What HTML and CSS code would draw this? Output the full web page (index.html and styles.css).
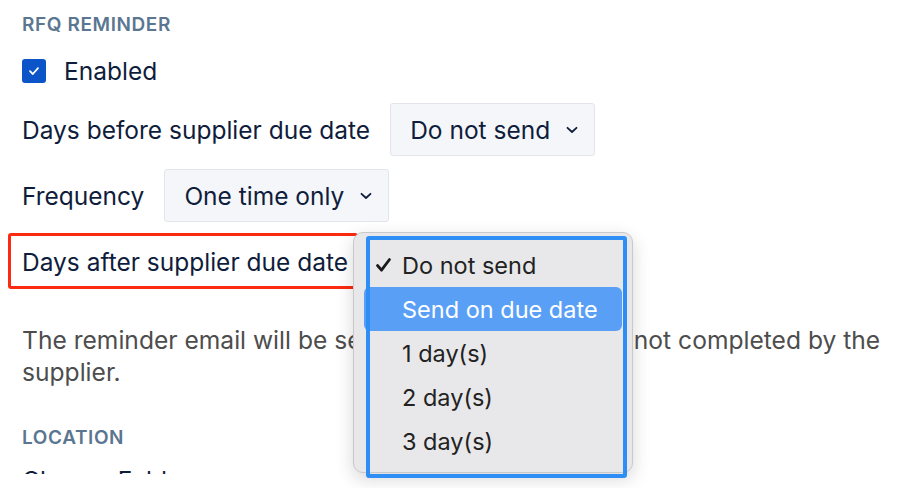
FILE: index.html
```html
<!DOCTYPE html>
<html>
<head>
<meta charset="utf-8">
<link rel="stylesheet" href="styles.css">
</head>
<body>
<div class="screen">
  <div class="page">
    <h2 class="section-title">RFQ Reminder</h2>
    <label class="check-row">
      <span class="checkbox">
        <svg width="12" height="10" viewBox="0 0 12 10"><path d="M2 5.2 L4.8 8 L10 2.2" fill="none" stroke="#fff" stroke-width="1.8" stroke-linecap="round" stroke-linejoin="round"/></svg>
      </span>
      <span class="check-label">Enabled</span>
    </label>
    <div class="field-row">
      <span class="label">Days before supplier due date</span>
      <div class="select">
        <span>Do not send</span>
        <svg class="chev" width="12" height="8" viewBox="0 0 12 8"><path d="M1.5 1.8 L6 6 L10.5 1.8" fill="none" stroke="#0f1d3c" stroke-width="1.8" stroke-linecap="round" stroke-linejoin="round"/></svg>
      </div>
    </div>
    <div class="field-row">
      <span class="label">Frequency</span>
      <div class="select">
        <span>One time only</span>
        <svg class="chev" width="12" height="8" viewBox="0 0 12 8"><path d="M1.5 1.8 L6 6 L10.5 1.8" fill="none" stroke="#0f1d3c" stroke-width="1.8" stroke-linecap="round" stroke-linejoin="round"/></svg>
      </div>
    </div>
    <div class="field-row">
      <span class="label marked">Days after supplier due date</span>
    </div>
    <p class="help">The reminder email will be sent if the RFQ request is not completed by the supplier.</p>
    <h2 class="section-title loc">Location</h2>
    <div class="text-row">Choose Folder</div>
  </div>

  <div class="menu">
    <div class="menu-item checked">
      <svg class="tick" width="18" height="16" viewBox="0 0 18 16"><path d="M2.5 8.5 L6.5 13.2 L14.5 2.5" fill="none" stroke="#1a1a1a" stroke-width="2.8" stroke-linecap="round" stroke-linejoin="round"/></svg>
      Do not send
    </div>
    <div class="menu-item active">Send on due date</div>
    <div class="menu-item">1 day(s)</div>
    <div class="menu-item">2 day(s)</div>
    <div class="menu-item">3 day(s)</div>
  </div>
  <div class="annot-blue"></div>
</div>
</body>
</html>
```
FILE: styles.css
```css
* { box-sizing: border-box; }
html, body { margin: 0; padding: 0; background: #fff; }
body { font-family: Inter, "Noto Sans", sans-serif; }

.screen { position: relative; width: 905px; height: 488px; overflow: hidden; }

.page {
  height: 474px;
  overflow: hidden;
  padding: 13px 8px 0 22px;
  display: flex;
  flex-direction: column;
  align-items: flex-start;
}
.page > * { flex-shrink: 0; }

.section-title {
  margin: 0;
  font-size: 19px;
  line-height: 24px;
  font-weight: 600;
  letter-spacing: 0.6px;
  color: #5b7691;
  text-transform: uppercase;
}

.check-row {
  display: flex;
  align-items: center;
  gap: 18px;
  margin-top: 19px;
  height: 30px;
}
.checkbox {
  width: 24px; height: 24px;
  border-radius: 3px;
  background: #0b55c9;
  display: flex; align-items: center; justify-content: center;
}
.check-label, .label, .text-row {
  font-size: 24.5px;
  color: #0f1d3c;
}

.field-row {
  display: flex;
  align-items: center;
  gap: 20px;
  height: 53px;
  margin-top: 13px;
}
.field-row:first-of-type { margin-top: 17px; }

.select {
  height: 53px;
  display: flex;
  align-items: center;
  gap: 16px;
  padding: 0 16px 0 19px;
  background: #f5f6fa;
  border: 1px solid #e3e5ec;
  border-radius: 3px;
  font-size: 24.5px;
  color: #0f1d3c;
}

.marked { position: relative; }
.marked::before {
  content: "";
  position: absolute;
  left: -14px; right: -10px; top: -14px; bottom: -12px;
  border: 3.5px solid #fb2a10;
  border-radius: 3px;
}

.help {
  margin: 36px 0 0;
  font-size: 24.6px;
  line-height: 32px;
  color: #4d4d4d;
}

.section-title.loc { margin-top: 38px; }

.text-row { margin-top: 15px; line-height: 30px; }

.menu {
  position: absolute;
  left: 353px; top: 232px;
  width: 280px; height: 241px;
  background: #e8e8ea;
  border: 1px solid #c9c9cc;
  border-radius: 10px;
  box-shadow: 0 6px 18px rgba(0,0,0,0.16);
  padding: 10px 10px 0 10px;
  display: flex;
  flex-direction: column;
}
.menu-item {
  position: relative;
  height: 44px;
  flex-shrink: 0;
  display: flex;
  align-items: center;
  padding-left: 38px;
  font-size: 23.5px;
  color: #222;
  border-radius: 6px;
}
.menu-item.active { background: #5a9ff6; color: #fff; }
.tick { position: absolute; left: 11px; top: 14px; }

.annot-blue {
  position: absolute;
  left: 366px; top: 236px;
  width: 261px; height: 242px;
  border: 4px solid #2e8ef6;
  border-radius: 3px;
}
```
